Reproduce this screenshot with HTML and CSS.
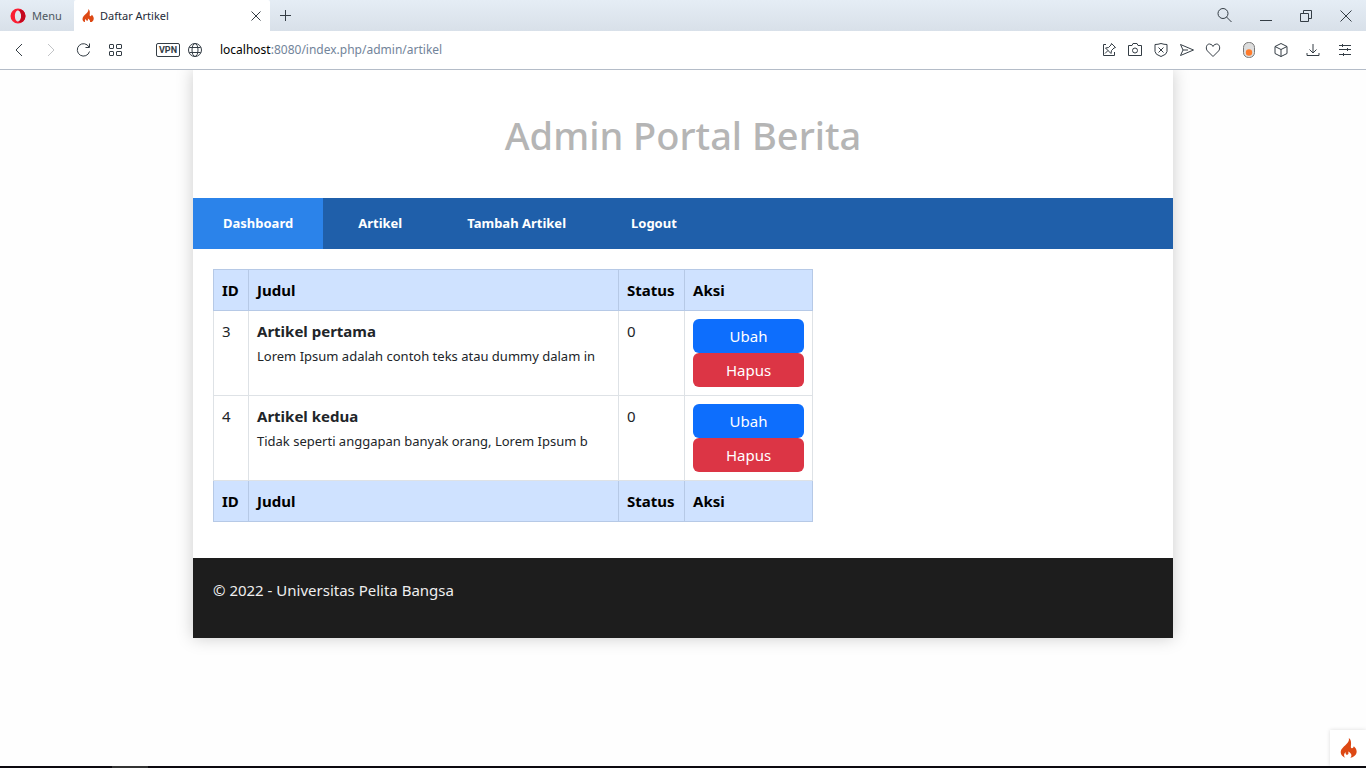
FILE: index.html
```html
<!DOCTYPE html>
<html lang="id">
<head>
<meta charset="utf-8">
<title>Daftar Artikel</title>
<link rel="stylesheet" href="styles.css">
</head>
<body>
<header class="tabs">
  <button class="menu" type="button">
    <svg width="16" height="16" viewBox="0 0 16 16"><path fill="#fa1e32" fill-rule="evenodd" d="M8 .5a7.5 7.5 0 1 0 0 15a7.5 7.5 0 1 0 0-15zM8 2.500c2 0 3.100 2.500 3.100 5.500s-1.100 5.500-3.100 5.500S4.900 11 4.900 8S6 2.500 8 2.500z"/><path fill="#c4081f" d="M8 2.500C9.800 1 12.300 1.700 13.300 2.700a7.500 7.500 0 0 1 0 10.600C12.300 14.300 9.800 15 8 13.500c2 0 3.100-2.500 3.100-5.500S10 2.500 8 2.500z"/></svg>
    <span>Menu</span>
  </button>
  <div class="tab">
    <svg width="12" height="13" viewBox="0 0 24 26"><use href="#flame"/></svg>
    <span class="tab-title">Daftar Artikel</span>
    <button class="icon" type="button" aria-label="Tutup tab"><svg width="12" height="12" viewBox="0 0 12 12"><path d="M1.500 1.500l9 9M10.500 1.500l-9 9"/></svg></button>
  </div>
  <button class="icon new-tab" type="button" aria-label="Tab baru"><svg width="13" height="13" viewBox="0 0 13 13"><path d="M6.500 1v11M1 6.500h11"/></svg></button>
  <div class="window-tools">
    <button class="icon" type="button" aria-label="Cari"><svg width="16" height="16" viewBox="0 0 16 16"><circle cx="7" cy="5.500" r="5"/><path d="M10.500 9l5 5"/></svg></button>
    <button class="icon" type="button" aria-label="Minimalkan"><svg width="12" height="16" viewBox="0 0 12 16"><path d="M0 12.500h12"/></svg></button>
    <button class="icon" type="button" aria-label="Pulihkan"><svg width="12" height="12" viewBox="0 0 12 12"><path d="M.5 3.500h8v8h-8zM3.500 3.500v-3h8v8h-3"/></svg></button>
    <button class="icon" type="button" aria-label="Tutup"><svg width="12" height="12" viewBox="0 0 12 12"><path d="M.5.5l11 11M11.500.5l-11 11"/></svg></button>
  </div>
</header>

<div class="toolbar">
  <div class="nav-tools">
    <button class="icon" type="button" aria-label="Kembali"><svg width="16" height="16" viewBox="0 0 16 16"><path d="M11 2L5 8l6 6"/></svg></button>
    <button class="icon disabled" type="button" aria-label="Maju"><svg width="16" height="16" viewBox="0 0 16 16"><path d="M5 2l6 6l-6 6"/></svg></button>
    <button class="icon" type="button" aria-label="Muat ulang"><svg width="16" height="16" viewBox="0 0 16 16"><path d="M14.500 9.500A6.200 6.200 0 1 1 14 5M14.500 1.500v4h-4"/></svg></button>
    <button class="icon" type="button" aria-label="Panggilan cepat"><svg width="16" height="16" viewBox="0 0 16 16"><rect x="2.500" y="2.500" width="4" height="4" rx=".5"/><rect x="9.500" y="2.500" width="5" height="4" rx=".5"/><rect x="2.500" y="9.500" width="4" height="4" rx=".5"/><rect x="9.500" y="9.500" width="5" height="4" rx=".5"/></svg></button>
  </div>
  <button class="vpn" type="button">VPN</button>
  <svg class="line" width="16" height="16" viewBox="0 0 16 16"><circle cx="8" cy="8" r="6.500"/><ellipse cx="8" cy="8" rx="3" ry="6.500"/><path d="M2.300 5.500h11.400M2.300 10.500h11.400"/></svg>
  <a class="address" href="#"><span class="host">localhost</span>:8080/index.php/admin/artikel</a>
  <div class="page-tools">
    <button class="icon" type="button" aria-label="Sematkan"><svg width="16" height="16" viewBox="0 0 16 16"><path d="M5 2.500H2.500v11h11V10M10.500 1.500l4 4l-1.500.5l-2.500 2.500l-.5 3l-5.500-5.500l3-.5L10 3zM7 8.500l-3 3"/></svg></button>
    <button class="icon" type="button" aria-label="Cuplikan"><svg width="16" height="16" viewBox="0 0 16 16"><path d="M1.500 3.500H5l1-2h4l1 2h3.500v10h-13z"/><circle cx="8" cy="8.500" r="2.500"/></svg></button>
    <button class="icon" type="button" aria-label="Blokir iklan"><svg width="16" height="16" viewBox="0 0 16 16"><path d="M8 1.500q3 1 6 1v7q0 3-6 5q-6-2-6-5v-7q3 0 6-1zM5.500 5.500l5 5M10.500 5.500l-5 5"/></svg></button>
    <button class="icon" type="button" aria-label="Kirim"><svg width="16" height="16" viewBox="0 0 16 16"><path d="M1.500 2.500L14.500 8l-13 5.500L4 8zM4 8h5"/></svg></button>
    <button class="icon" type="button" aria-label="Simpan"><svg width="16" height="16" viewBox="0 0 16 16"><path d="M8 14.500L2.500 9C.5 7 1 2 4.500 2Q7 2 8 4.500Q9 2 11.500 2C15 2 15.500 7 13.500 9z"/></svg></button>
  </div>
  <div class="extension-tools">
    <button class="icon" type="button" aria-label="Ekstensi"><svg width="16" height="16" viewBox="0 0 16 16"><rect x="2.500" y=".5" width="11" height="15" rx="5" fill="#ddd" stroke="#777"/><circle cx="8" cy="10.500" r="3.200" fill="#ff7b2b" stroke="none"/></svg></button>
    <button class="icon" type="button" aria-label="Kubus"><svg width="16" height="16" viewBox="0 0 16 16"><path d="M8 1.500l6 3v7l-6 3l-6-3v-7zM2 4.500l6 3l6-3M8 7.500v7"/></svg></button>
    <button class="icon" type="button" aria-label="Unduhan"><svg width="16" height="16" viewBox="0 0 16 16"><path d="M8 2v8.500M4.500 7.500L8 11l3.500-3.500M2 11v2.500h12V11"/></svg></button>
    <button class="icon" type="button" aria-label="Pengaturan"><svg width="16" height="16" viewBox="0 0 16 16"><path d="M2 3.500h12M2 7.500h12M2 12.500h12M5.500 2v3M10.500 6v3M6.500 11v3"/></svg></button>
  </div>
</div>

<div class="viewport">
  <div class="container">
    <h1 class="site-title">Admin Portal Berita</h1>
    <nav class="site-nav">
      <a class="active" href="#">Dashboard</a>
      <a href="#">Artikel</a>
      <a href="#">Tambah Artikel</a>
      <a href="#">Logout</a>
    </nav>
    <main class="content">
      <table class="articles">
        <colgroup><col class="col-id"><col class="col-title"><col class="col-status"><col class="col-action"></colgroup>
        <thead><tr><th>ID</th><th>Judul</th><th>Status</th><th>Aksi</th></tr></thead>
        <tbody>
          <tr>
            <td>3</td>
            <td><b>Artikel pertama</b><p><small>Lorem Ipsum adalah contoh teks atau dummy dalam in</small></p></td>
            <td>0</td>
            <td><button class="btn edit" type="button">Ubah</button><button class="btn delete" type="button">Hapus</button></td>
          </tr>
          <tr>
            <td>4</td>
            <td><b>Artikel kedua</b><p><small>Tidak seperti anggapan banyak orang, Lorem Ipsum b</small></p></td>
            <td>0</td>
            <td><button class="btn edit" type="button">Ubah</button><button class="btn delete" type="button">Hapus</button></td>
          </tr>
        </tbody>
        <tfoot><tr><th>ID</th><th>Judul</th><th>Status</th><th>Aksi</th></tr></tfoot>
      </table>
    </main>
    <footer class="site-footer"><p>© 2022 - Universitas Pelita Bangsa</p></footer>
  </div>
  <button class="debug" type="button" aria-label="Debug toolbar">
    <svg width="17" height="20" viewBox="0 0 24 28"><path id="flame" fill="#dd4814" d="M12.500 0c.8 4-1 6-4 9C5 12.500 1 15.500 1 20c0 3.500 2.500 6.500 6.500 7.800C5 25.500 5 22 8 19.500c-.5 2.500.5 4 2 4c2 0 2.500-2 1.500-4.500c4 1.500 6.500 6 3 8.800C20 27 23.500 23.500 23.500 19c0-4-2.500-6-4-7.500c-.5 2-1.500 3-2.700 2.800c-1.800-.3-1.500-2.300-1.300-4.300C16 6 15.500 2 12.500 0z"/></svg>
  </button>
</div>
<div class="taskbar"><span></span></div>
</body>
</html>
```
FILE: styles.css
```css
* { box-sizing: border-box; }
body {
  margin: 0;
  height: 100vh;
  display: flex;
  flex-direction: column;
  overflow: hidden;
  background: #fff;
  color: #212529;
  font: 15px/24px "Noto Sans", "Open Sans", sans-serif;
}
button {
  padding: 0;
  border: 0;
  background: none;
  color: inherit;
  font: inherit;
}
a { text-decoration: none; }
svg { display: block; flex: none; }
.icon svg, .line { fill: none; stroke: #343d45; }

.tabs {
  flex: none;
  height: 31px;
  display: flex;
  align-items: center;
  background: linear-gradient(#e5edf5, #d8e0e9);
  font-size: 11px;
}
.menu {
  width: 74px;
  height: 31px;
  padding-left: 10px;
  display: flex;
  align-items: center;
  gap: 6px;
  color: #4c5660;
}
.tab {
  width: 196px;
  height: 31px;
  padding: 0 8px;
  display: flex;
  align-items: center;
  gap: 6px;
  background: #fff;
  border-radius: 2px 2px 0 0;
  color: #1d2a38;
}
.tab-title { flex: 1; }
.new-tab { margin-left: 9px; }
.window-tools {
  margin-left: auto;
  padding-right: 14px;
  display: flex;
  align-items: center;
  gap: 28px;
}

.toolbar {
  flex: none;
  height: 39px;
  padding: 0 13px 0 11px;
  display: flex;
  align-items: center;
  background: #fff;
  border-bottom: 1px solid #b4bcc8;
}
.nav-tools { display: flex; gap: 16px; margin-right: 33px; }
.disabled { opacity: 0.3; }
.vpn {
  width: 24px;
  height: 14px;
  margin-right: 7px;
  border: 1px solid #343d45;
  border-radius: 2px;
  color: #343d45;
  font: bold 9px/12px Roboto, sans-serif;
}
.address {
  flex: 1;
  margin-left: 17px;
  color: #72849a;
  font-size: 12px;
}
.host { color: #000; }
.page-tools { display: flex; gap: 10px; margin-right: 20px; }
.extension-tools { display: flex; gap: 16px; }

.viewport {
  flex: 1;
  position: relative;
  overflow: hidden;
  background: #fefefe;
}
.container {
  max-width: 980px;
  margin: 0 auto;
  background: #fff;
  box-shadow: 0 0 16px #ccc;
}
.site-title {
  margin: 0;
  padding: 41px 20px 39px;
  color: #b5b5b5;
  font-size: 38px;
  font-weight: 500;
  line-height: 48px;
  text-align: center;
}
.site-nav {
  display: flex;
  gap: 5px;
  background: #1f5faa;
  font-size: 13px;
  font-weight: bold;
  line-height: 21px;
}
.site-nav a { padding: 15px 30px; color: #fff; }
.site-nav .active { background: #2b83ea; }
.content { padding: 20px 20px 36px; }

.articles {
  width: 600px;
  table-layout: fixed;
  border-collapse: collapse;
}
.col-id { width: 35px; }
.col-title { width: 370px; }
.col-status { width: 66px; }
.articles th, .articles td {
  padding: 8px;
  border: 1px solid #dee2e6;
  text-align: left;
  vertical-align: top;
}
.articles th {
  background: #cfe2ff;
  border-color: #b6c9e6;
  color: #000;
}
.articles p { margin: 0; }
.articles small { font-size: 13px; }
.btn {
  display: block;
  width: 100%;
  height: 34px;
  border-radius: 6px;
  color: #fff;
}
.edit { background: #0d6efd; }
.delete { background: #dc3545; }

.site-footer {
  padding: 20px 20px 36px;
  background: #1d1d1d;
  color: #eee;
}
.site-footer p { margin: 0; }
.debug {
  position: absolute;
  right: 0;
  bottom: 0;
  width: 36px;
  height: 36px;
  display: grid;
  place-items: center;
  background: #fff;
  box-shadow: 0 0 4px #ddd;
}
.taskbar {
  flex: none;
  height: 2px;
  padding-left: 112px;
  background: #0c0a0f;
}
.taskbar span {
  display: block;
  width: 36px;
  height: 2px;
  background: #333;
}
```
